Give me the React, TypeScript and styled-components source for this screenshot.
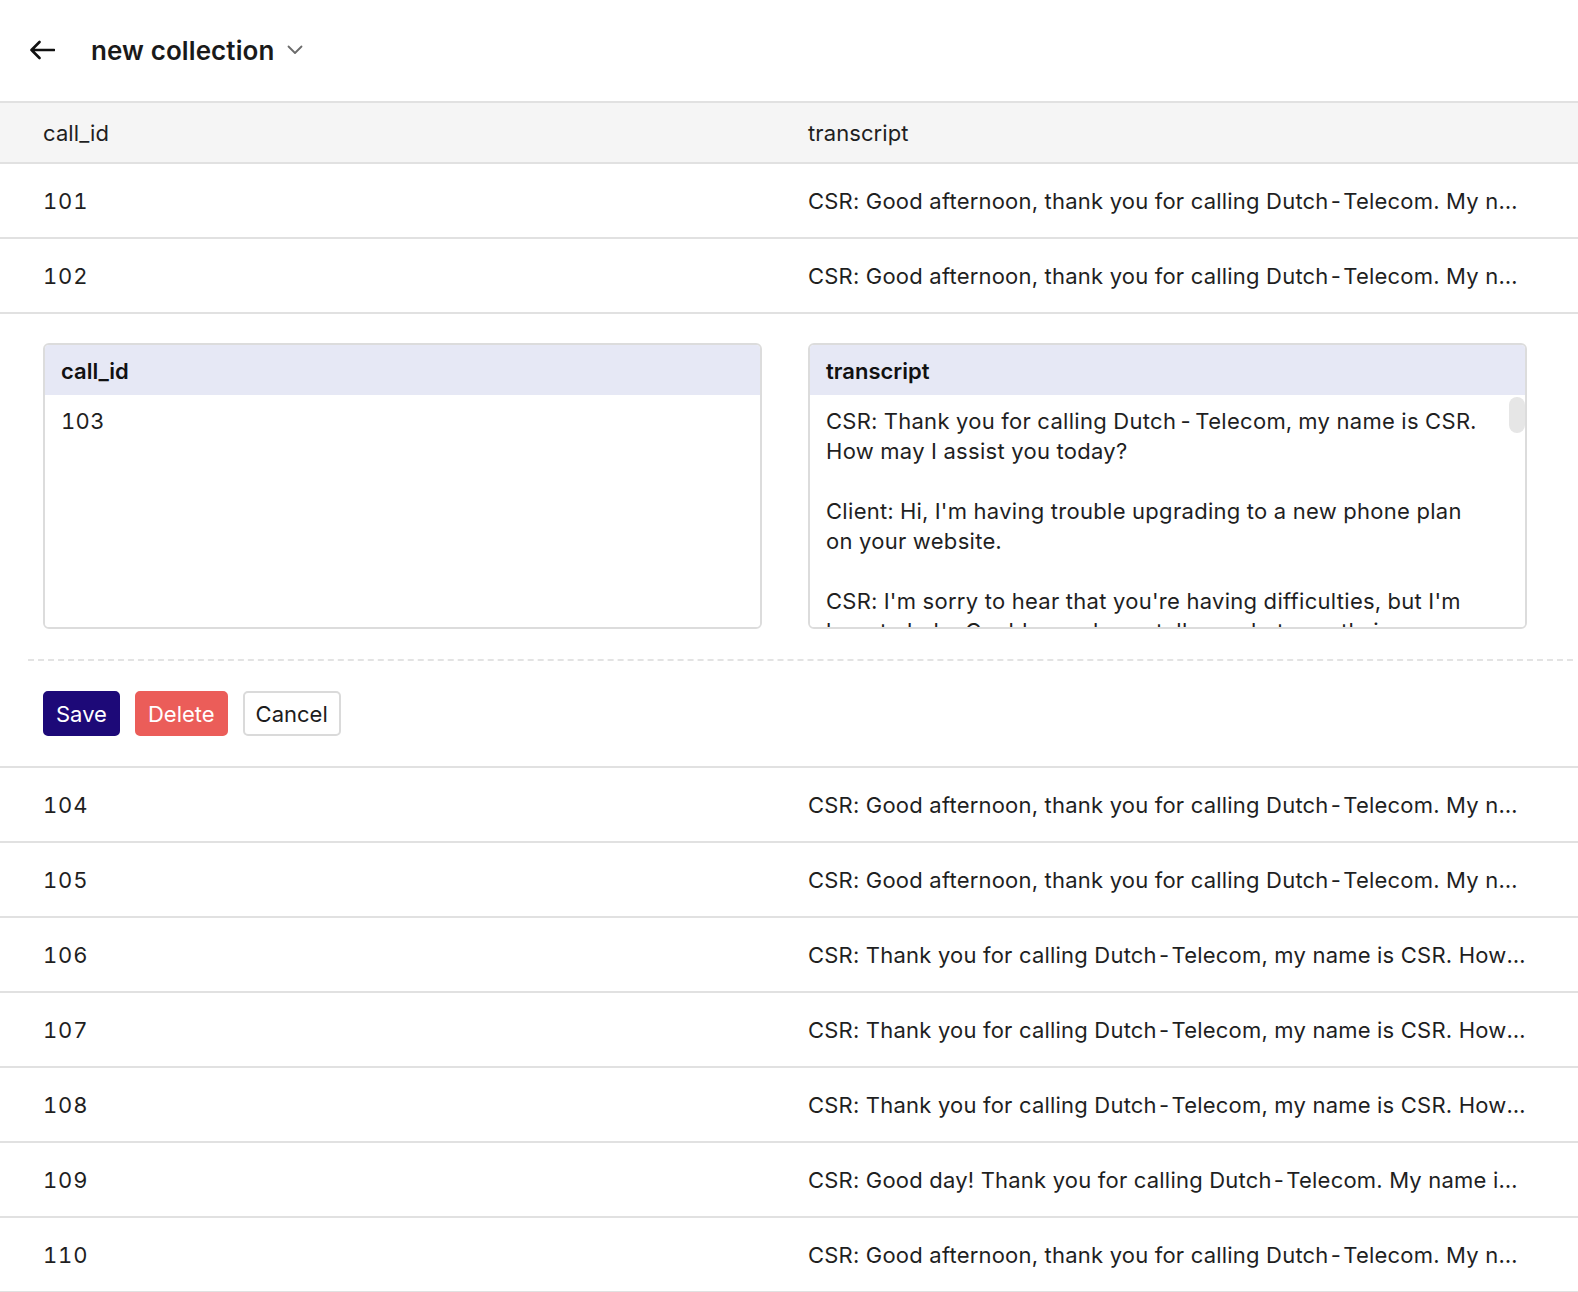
import React from "react";
import styled, { createGlobalStyle } from "styled-components";

const GlobalStyle = createGlobalStyle`
  * { box-sizing: border-box; }
  body {
    margin: 0;
    background: #ffffff;
    font-family: "Inter", "Noto Sans", sans-serif;
    color: #1c1c1c;
  }
`;

// the hyphen in the company name is drawn with a little air around it
const DT = "Dutch\u200A-\u200ATelecom";

const rows = [
  { id: "101", transcript: `CSR: Good afternoon, thank you for calling ${DT}. My name is Anna, how can I help you today?` },
  { id: "102", transcript: `CSR: Good afternoon, thank you for calling ${DT}. My name is Mark, how can I help you today?` },
  { id: "103", transcript: "", editing: true },
  { id: "104", transcript: `CSR: Good afternoon, thank you for calling ${DT}. My name is Lisa, how may I assist you?` },
  { id: "105", transcript: `CSR: Good afternoon, thank you for calling ${DT}. My name is Tom, what can I do for you?` },
  { id: "106", transcript: `CSR: Thank you for calling ${DT}, my name is CSR. How may I assist you today?` },
  { id: "107", transcript: `CSR: Thank you for calling ${DT}, my name is CSR. How may I assist you today?` },
  { id: "108", transcript: `CSR: Thank you for calling ${DT}, my name is CSR. How may I assist you today?` },
  { id: "109", transcript: `CSR: Good day! Thank you for calling ${DT}. My name is Sarah, how can I help you?` },
  { id: "110", transcript: `CSR: Good afternoon, thank you for calling ${DT}. My name is Peter, how can I help you?` },
];

const longTranscript = [
  `CSR: Thank you for calling ${DT}, my name is CSR. How may I assist you today?`,
  "Client: Hi, I'm having trouble upgrading to a new phone plan on your website.",
  "CSR: I'm sorry to hear that you're having difficulties, but I'm here to help. Could you please tell me what exactly is happening?",
  "Client: Every time I select the new plan and click continue, the page just reloads and nothing changes.",
  "CSR: I understand. Could you please provide me with your account number so I can look into this?",
  "Client: Sure, it's 4821-5530-17.",
  "CSR: Thank you. I can see your account now. It looks like there is a pending order that is blocking the upgrade.",
  "Client: Oh, I didn't know that. I tried to order a new SIM card last week.",
  "CSR: That explains it. I can cancel that pending order for you, if the SIM card is no longer needed.",
  "Client: Yes, please cancel it. I already received a SIM card in the store.",
  "CSR: Done. The pending order has been cancelled. Would you like me to upgrade your plan right now?",
  "Client: That would be great. I'd like the Unlimited Plus plan, please.",
  "CSR: Of course. The Unlimited Plus plan will be active from tomorrow, and your next bill will reflect the change.",
  "Client: Perfect, thank you so much for your help.",
  "CSR: You're welcome! Is there anything else I can help you with today?",
  "Client: No, that's all. Have a nice day!",
].join("\n\n");

function BackArrow() {
  return (
    <svg width="26" height="20" viewBox="0 0 26 20" fill="none">
      <path d="M25 10H2.5M10.5 2L2.5 10l8 8" stroke="#111" strokeWidth="2.6" strokeLinecap="round" strokeLinejoin="round" />
    </svg>
  );
}

function Chevron() {
  return (
    <svg width="16" height="10" viewBox="0 0 16 10" fill="none">
      <path d="M1.5 1.5L8 8l6.5-6.5" stroke="#6b6b6b" strokeWidth="1.8" strokeLinecap="round" strokeLinejoin="round" />
    </svg>
  );
}

export default function App() {
  return (
    <>
      <GlobalStyle />
      <Page>
        <TopBar>
          <IconButton aria-label="back">
            <BackArrow />
          </IconButton>
          <Title>
            new collection
            <Chevron />
          </Title>
        </TopBar>
        <HeadRow>
          <Cell>call_id</Cell>
          <Cell>transcript</Cell>
        </HeadRow>
        {rows.map((row) =>
          row.editing ? (
            <EditPanel key={row.id}>
              <Fields>
                <Field>
                  <FieldLabel>call_id</FieldLabel>
                  <FieldBody>
                    <FieldInput defaultValue={row.id} />
                  </FieldBody>
                </Field>
                <Field>
                  <FieldLabel>transcript</FieldLabel>
                  <FieldBody>
                    <FieldInput defaultValue={longTranscript} scrollable />
                    <ScrollThumb />
                  </FieldBody>
                </Field>
              </Fields>
              <Divider />
              <Actions>
                <Button variant="primary">Save</Button>
                <Button variant="danger">Delete</Button>
                <Button variant="plain">Cancel</Button>
              </Actions>
            </EditPanel>
          ) : (
            <Row key={row.id}>
              <Cell numeric>{row.id}</Cell>
              <Cell>{row.transcript}</Cell>
            </Row>
          )
        )}
      </Page>
    </>
  );
}

const Page = styled.div`
  width: 100%;
  display: flex;
  flex-direction: column;
`;

const TopBar = styled.header`
  height: 103px;
  display: flex;
  align-items: center;
  gap: 36px;
  padding: 0 0 1px 29px;
  border-bottom: 2px solid #e1e1e1;
`;

const IconButton = styled.button`
  display: flex;
  align-items: center;
  padding: 0;
  border: none;
  background: none;
  cursor: pointer;
`;

const Title = styled.h1`
  margin: 0;
  display: flex;
  align-items: center;
  gap: 12px;
  font-size: 26px;
  font-weight: 600;
  color: #1a1a1a;
  letter-spacing: 0.1px;
`;

const Row = styled.div`
  height: 75px;
  display: grid;
  grid-template-columns: 1fr 1fr;
  align-items: center;
  padding-right: 48px;
  border-bottom: 2px solid #e1e1e1;
  font-size: 22px;
  letter-spacing: 0.2px;
  color: #1f1f1f;
`;

const HeadRow = styled(Row)`
  height: 61px;
  background: #f5f5f5;
  letter-spacing: 0.1px;
`;

const Cell = styled.div<{ numeric?: boolean }>`
  padding: 1px 3px 0 43px;
  white-space: nowrap;
  overflow: hidden;
  text-overflow: ellipsis;
  font-variant-numeric: ${(p) => (p.numeric ? "tabular-nums" : "normal")};
  letter-spacing: ${(p) => (p.numeric ? "0.8px" : "inherit")};
`;

const EditPanel = styled.section`
  padding-top: 29px;
  border-bottom: 2px solid #e1e1e1;
`;

const Fields = styled.div`
  display: grid;
  grid-template-columns: 1fr 1fr;
  gap: 46px;
  padding: 0 51px 0 43px;
`;

const Field = styled.div`
  height: 286px;
  display: flex;
  flex-direction: column;
  border: 2px solid #dcdcdc;
  border-radius: 6px;
  overflow: hidden;
`;

const FieldLabel = styled.div`
  height: 50px;
  flex-shrink: 0;
  display: flex;
  align-items: center;
  padding: 2px 16px 0;
  background: #e6e8f5;
  font-size: 22px;
  font-weight: 600;
  color: #111;
`;

const FieldBody = styled.div`
  position: relative;
  flex: 1;
  display: flex;
  min-height: 0;
`;

const FieldInput = styled.textarea<{ scrollable?: boolean }>`
  flex: 1;
  width: 100%;
  margin: 0;
  padding: ${(p) => (p.scrollable ? "11px 32px 11px 16px" : "11px 16px")};
  border: none;
  outline: none;
  resize: none;
  overflow: hidden;
  font-family: "Inter", "Noto Sans", sans-serif;
  font-size: 22px;
  line-height: 30px;
  letter-spacing: 0.3px;
  font-variant-numeric: tabular-nums;
  color: #1f1f1f;
  background: #fff;
`;

const ScrollThumb = styled.div`
  position: absolute;
  top: 2px;
  right: 0;
  width: 16px;
  height: 36px;
  border-radius: 8px;
  background: #e6e6e6;
`;

const Divider = styled.hr`
  margin: 30px 5px 0 28px;
  border: none;
  border-top: 2px dashed #e3e3e3;
`;

const Actions = styled.div`
  display: flex;
  gap: 15px;
  padding: 30px 43px 30px;
`;

const Button = styled.button<{ variant: "primary" | "danger" | "plain" }>`
  height: 45px;
  padding: 0 11px;
  border-radius: 5px;
  font-family: "Inter", "Noto Sans", sans-serif;
  font-size: 22px;
  cursor: pointer;
  border: 2px solid
    ${(p) => (p.variant === "primary" ? "#1d0978" : p.variant === "danger" ? "#eb5d59" : "#dadada")};
  background: ${(p) => (p.variant === "primary" ? "#1d0978" : p.variant === "danger" ? "#eb5d59" : "#ffffff")};
  color: ${(p) => (p.variant === "plain" ? "#1c1c1c" : "#ffffff")};
`;
